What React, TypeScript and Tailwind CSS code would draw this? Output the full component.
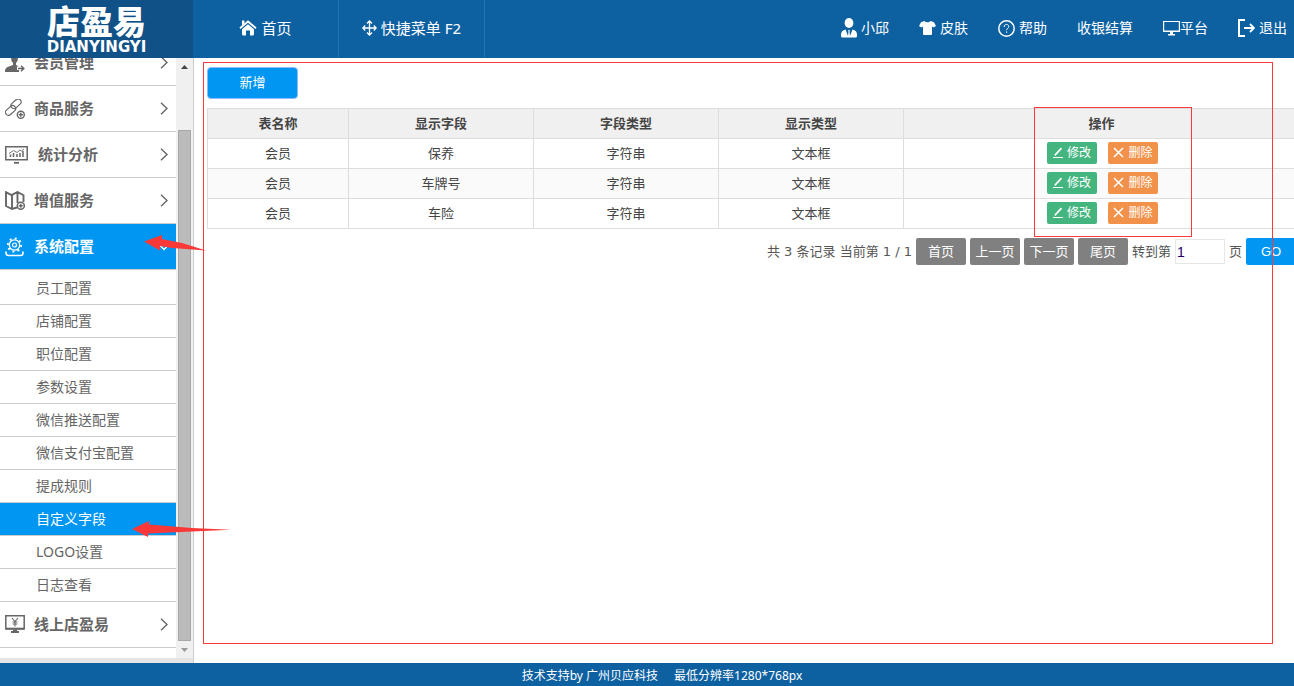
import { useState } from "react";
import type { ReactNode } from "react";

const HomeIcon = () => (
  <svg width="18" height="16" viewBox="0 0 18 16" fill="none">
    <path d="M1 8.2 9 1.5l8 6.7" stroke="currentColor" strokeWidth="1.8" />
    <path d="M3 0.5h2.4v3L3 5.5z" fill="currentColor" />
    <path
      d="M3 9.2 9 4.3l6 4.9V14q0 1.5-1.5 1.5H11v-5H7v5H4.500Q3 15.500 3 14z"
      fill="currentColor"
    />
  </svg>
);

const MoveIcon = () => (
  <svg width="15" height="16" viewBox="0 0 15 16" fill="none">
    <path
      d="M7.500 1.500v13M1 8h13M5 3.500 7.500 1 10 3.500M5 12.500 7.500 15l2.500-2.500M3.200 5.500.8 8l2.400 2.500M11.800 5.500 14.200 8l-2.400 2.500"
      stroke="currentColor"
      strokeWidth="1.300"
    />
  </svg>
);

const UserIcon = () => (
  <svg width="16" height="20" viewBox="0 0 16 20" fill="currentColor">
    <ellipse cx="8" cy="5" rx="4.400" ry="5" />
    <path d="M4.500 11.500 7 18l.5-4.500-.7-1.300h2.400l-.7 1.300L9 18l2.500-6.500c3 .7 4.500 2.500 4.500 5V18q0 1.500-1.500 1.500h-13Q0 19.500 0 18v-1.500c0-2.500 1.500-4.300 4.500-5z" />
  </svg>
);

const ShirtIcon = () => (
  <svg width="17" height="14" viewBox="0 0 17 14" fill="currentColor">
    <path d="M5.500 0c1 1.800 5 1.800 6 0L15 1.200 17 5l-2.500 1.500L13 5.500V13q0 1-1 1H5q-1 0-1-1V5.500L2.500 6.500 0 5l2-3.800z" />
  </svg>
);

const HelpIcon = () => (
  <svg width="17" height="17" viewBox="0 0 17 17" fill="none">
    <circle cx="8.500" cy="8.500" r="7.700" stroke="currentColor" strokeWidth="1.500" />
    <path
      d="M6.200 7c0-1.800 1-2.600 2.300-2.600s2.300.8 2.300 2.200c0 1.600-2.200 1.800-2.200 3.600"
      stroke="currentColor"
      strokeWidth="1"
    />
    <path d="M8 11.500h1.200v1.200H8z" fill="currentColor" />
  </svg>
);

const ScreenIcon = () => (
  <svg width="17" height="16" viewBox="0 0 17 16" fill="none">
    <path d="M.6 1.500h15.800v10H.6z" stroke="currentColor" strokeWidth="1.200" />
    <path d="M.5 10.500h16V12h-16zM7 12h3v2h2v1.500H5V14h2z" fill="currentColor" />
  </svg>
);

const ExitIcon = () => (
  <svg width="17" height="18" viewBox="0 0 17 18" fill="none">
    <path d="M7 1H1v16h6" stroke="currentColor" strokeWidth="2" />
    <path d="M6 9h10M12 5l4 4-4 4" stroke="currentColor" strokeWidth="1.800" />
  </svg>
);

const MemberIcon = () => (
  <svg width="20" height="20" viewBox="0 0 20 20" fill="currentColor">
    <path d="M5.500 0h8l-1 8-1.500 2v2l3 1.200H12V17h2v2H0c0-4 1.500-5 8-7v-2L6.500 8z" />
    <path
      d="M13 15.500h5M16 12.800l2.800 2.700L16 18.200"
      fill="none"
      stroke="currentColor"
      strokeWidth="1.500"
    />
  </svg>
);

const LinkIcon = () => (
  <svg width="20" height="20" viewBox="0 0 20 20" fill="none" stroke="currentColor">
    <rect x="5.300" y="1.800" width="11.500" height="6" rx="3" transform="rotate(-42 11 4.800)" strokeWidth="1.200" />
    <rect x="-.2" y="8.500" width="11.500" height="6" rx="3" transform="rotate(-42 5.500 11.500)" strokeWidth="1.200" />
    <circle cx="15.800" cy="15.800" r="3.500" fill="white" strokeWidth="1.400" />
    <path d="M15.800 13.800v4M13.800 15.800h4" strokeWidth="1.400" />
  </svg>
);

const ChartIcon = () => (
  <svg width="24" height="18" viewBox="0 0 24 18" fill="none" stroke="currentColor">
    <path d="M.8.8h21.400v12.900H.8z" strokeWidth="1.500" />
    <path d="M5.500 11V8.500M8.500 11V7M12 11V8M15 11V7M18 11V5" strokeWidth="1.500" />
    <path d="m4 7.500 4.500-3 3.500 2 3-2.500 1.500 1L19 3" strokeWidth=".9" />
    <path d="M9 16.800h5" strokeWidth="1.800" />
  </svg>
);

const MapIcon = () => (
  <svg width="20" height="19" viewBox="0 0 20 19" fill="none" stroke="currentColor">
    <path
      d="M12 16.500 7 18l-6-3V1.200l5.500 3L12.500 1l6 3.200V11M7 4.200V18M12.500 1v11"
      strokeWidth="1.900"
    />
    <circle cx="15.800" cy="14.800" r="3.500" fill="white" strokeWidth="1.500" />
    <path d="M15.800 12.800v4M13.800 14.800h4" strokeWidth="1.500" />
  </svg>
);

const GearIcon = () => (
  <svg width="20" height="20" viewBox="0 0 20 20" fill="none" stroke="currentColor">
    <circle cx="9.500" cy="8" r="5.200" strokeWidth="1.300" />
    <circle cx="9.500" cy="8" r="2" strokeWidth="1.200" />
    <circle cx="9.500" cy="8" r="6.700" strokeWidth="1.800" strokeDasharray="2 3.260" />
    <path d="M1 14.500v1.500q0 2.500 2.500 2.500h12q2.500 0 2.500-2.500v-1.500" strokeWidth="1.600" />
  </svg>
);

const YenScreenIcon = () => (
  <svg width="20" height="19" viewBox="0 0 20 19" fill="none" stroke="currentColor">
    <path d="M.8.8h18.400v12.900H.8z" strokeWidth="1.500" />
    <path d="M.5 13.700h19" strokeWidth="2" />
    <path d="m7 3 3 3.500L13 3M10 6.500V11.500M7.500 7h5M7.500 9h5" strokeWidth="1.100" />
    <path d="M8 14.500h4V16h2v2H6v-2h2z" fill="currentColor" stroke="none" />
  </svg>
);

const ChevronIcon = ({ open }: { open: boolean }) => (
  <svg
    width="8"
    height="13"
    viewBox="0 0 8 13"
    fill="none"
    className={open ? "rotate-90 overflow-visible" : ""}
  >
    <path d="m1 .8 6 5.700-6 5.700" stroke="currentColor" strokeWidth="1.400" />
  </svg>
);

const EditIcon = () => (
  <svg width="10" height="11" viewBox="0 0 10 11" fill="none" stroke="currentColor">
    <path d="M0 10.500h10" strokeWidth="1" />
    <path d="M1.800 8.300 8.500 1.200" strokeWidth="1.700" />
  </svg>
);

const CrossIcon = () => (
  <svg width="11" height="11" viewBox="0 0 11 11" fill="none">
    <path d="m1 1 9 9M10 1l-9 9" stroke="currentColor" strokeWidth="1.500" />
  </svg>
);

const userLinks = [
  { label: "小邱", icon: <UserIcon />, gap: "gap-1" },
  { label: "皮肤", icon: <ShirtIcon />, gap: "gap-1" },
  { label: "帮助", icon: <HelpIcon />, gap: "gap-1" },
  { label: "收银结算", icon: null, gap: "" },
  { label: "平台", icon: <ScreenIcon />, gap: "" },
  { label: "退出", icon: <ExitIcon />, gap: "gap-1" },
];

const configItems = [
  "员工配置",
  "店铺配置",
  "职位配置",
  "参数设置",
  "微信推送配置",
  "微信支付宝配置",
  "提成规则",
  "自定义字段",
  "LOGO设置",
  "日志查看",
];

const fields = [
  { table: "会员", name: "保养", type: "字符串", display: "文本框" },
  { table: "会员", name: "车牌号", type: "字符串", display: "文本框" },
  { table: "会员", name: "车险", type: "字符串", display: "文本框" },
];

const pagers = ["首页", "上一页", "下一页", "尾页"];

function MenuItem({
  icon,
  label,
  active = false,
}: {
  icon: ReactNode;
  label: string;
  active?: boolean;
}) {
  return (
    <a
      href="#"
      className={`flex h-[46px] shrink-0 items-center border-b border-[#ccc] pl-[5px] pr-2 text-[15px] font-bold ${
        active ? "bg-[#0096f2] text-white" : "text-[#666]"
      }`}
    >
      {icon}
      <span className="ml-[9px] flex-1">{label}</span>
      <ChevronIcon open={active} />
    </a>
  );
}

function Header() {
  return (
    <header className="flex h-[58px] shrink-0 bg-[#0e61a1] text-white">
      <div className="flex w-[193px] shrink-0 flex-col items-center justify-center bg-[#105288]">
        <div className="text-[33px] leading-9 font-black">店盈易</div>
        <div className="font-['DejaVu_Sans',sans-serif] text-[15px] leading-[14px] font-bold">
          DIANYINGYI
        </div>
      </div>
      <nav className="flex text-[15px]">
        <a
          href="#"
          className="flex w-[146px] items-center justify-center gap-1 border-r border-[#2472ad] pb-0.5"
        >
          <HomeIcon />
          首页
        </a>
        <a
          href="#"
          className="flex w-[146px] items-center justify-center gap-1 border-r border-[#2472ad] pb-0.5"
        >
          <MoveIcon />
          快捷菜单 F2
        </a>
      </nav>
      <nav className="ml-auto flex items-center gap-[30px] pr-[7px] pb-0.5 text-sm">
        {userLinks.map(({ label, icon, gap }) => (
          <a key={label} href="#" className={`flex items-center whitespace-nowrap ${gap}`}>
            {icon}
            {label}
          </a>
        ))}
      </nav>
    </header>
  );
}

function Sidebar() {
  const [current, setCurrent] = useState("自定义字段");

  return (
    <aside className="flex w-[194px] shrink-0 flex-col border-r border-[#ccc]">
      <div className="flex min-h-0 flex-1">
        <div className="flex-1 overflow-hidden">
          <div className="-mt-[18px]">
            <MenuItem icon={<MemberIcon />} label="会员管理" />
            <MenuItem icon={<LinkIcon />} label="商品服务" />
            <MenuItem icon={<ChartIcon />} label="统计分析" />
            <MenuItem icon={<MapIcon />} label="增值服务" />
            <MenuItem icon={<GearIcon />} label="系统配置" active />
            <ul className="pt-0.5">
              {configItems.map((item) => (
                <li key={item}>
                  <a
                    href="#"
                    onClick={() => setCurrent(item)}
                    className={`flex h-[33px] items-center border-b border-[#ccc] pl-9 text-sm ${
                      item === current ? "bg-[#0096f2] text-white" : "text-[#666]"
                    }`}
                  >
                    {item}
                  </a>
                </li>
              ))}
            </ul>
            <MenuItem icon={<YenScreenIcon />} label="线上店盈易" />
          </div>
        </div>

        {/* scroll bar */}
        <div className="flex w-[17px] flex-col items-center bg-[#f0f0f0]">
          <svg width="17" height="17" viewBox="0 0 17 17">
            <path d="m5 11 3.500-4 3.500 4z" fill="#444" />
          </svg>
          <div className="mt-[55px] w-[13px] flex-1 border border-[#a8a8a8] bg-[#bbb]" />
          <svg width="17" height="17" viewBox="0 0 17 17">
            <path d="m5 7 3.500 4L12 7z" fill="#999" />
          </svg>
        </div>
      </div>
      <div className="h-[5px] bg-[#e5e5e5]" />
    </aside>
  );
}

function FieldTable() {
  const th = "border border-[#ddd] font-bold";
  const td = "border border-[#ddd]";

  return (
    <table className="mt-[9px] w-full table-fixed border-collapse text-center text-[13px] text-[#444]">
      <thead>
        <tr className="h-[30px] bg-[#f0f0f0]">
          <th className={`${th} w-[141px]`}>表名称</th>
          <th className={`${th} w-[185px]`}>显示字段</th>
          <th className={`${th} w-[185px]`}>字段类型</th>
          <th className={`${th} w-[185px]`}>显示类型</th>
          <th className={th}>操作</th>
        </tr>
      </thead>
      <tbody>
        {fields.map((field) => (
          <tr key={field.name} className="h-[30px] even:bg-[#fafafa]">
            <td className={td}>{field.table}</td>
            <td className={td}>{field.name}</td>
            <td className={td}>{field.type}</td>
            <td className={td}>{field.display}</td>
            <td className={td}>
              <div className="flex justify-center gap-[11px] pb-0.5 pl-0.5 text-xs text-white">
                <button className="flex h-[22px] w-[50px] items-center justify-center gap-1 rounded-xs bg-[#44b57f]">
                  <EditIcon />
                  修改
                </button>
                <button className="flex h-[22px] w-[50px] items-center justify-center gap-1 rounded-xs bg-[#f2914a]">
                  <CrossIcon />
                  删除
                </button>
              </div>
            </td>
          </tr>
        ))}
      </tbody>
    </table>
  );
}

function Pagination() {
  const [page, setPage] = useState("1");

  return (
    <div className="mt-[9px] flex items-center justify-end gap-1 pr-1 text-[13px] whitespace-nowrap text-[#555]">
      <span className="font-['DejaVu_Sans','Noto_Sans_CJK_SC',sans-serif]">
        共 3 条记录 当前第 1 / 1
      </span>
      {pagers.map((label) => (
        <button key={label} className="h-[27px] w-[50px] rounded-xs bg-[#808080] text-white">
          {label}
        </button>
      ))}
      <label htmlFor="page">转到第</label>
      <input
        id="page"
        value={page}
        onChange={(e) => setPage(e.target.value)}
        className="h-[25px] w-[50px] border border-[#e6e6e6] px-px font-['Liberation_Sans',sans-serif] text-sm text-[#206]"
      />
      <span>页</span>
      <button className="h-[27px] w-[50px] rounded-xs bg-[#0096f2] font-['Liberation_Sans',sans-serif] text-[13px] text-white">
        GO
      </button>
    </div>
  );
}

export default function App() {
  return (
    <div className="flex h-screen flex-col overflow-hidden bg-white font-['Noto_Sans','Noto_Sans_CJK_SC',sans-serif]">
      <Header />

      <div className="relative flex min-h-0 flex-1">
        <Sidebar />

        <main className="relative min-w-0 flex-1 overflow-hidden">
          <div className="-mr-1.5 ml-[13px] pt-[9px]">
            <button className="block h-8 w-[91px] rounded-sm border border-[#8fbcf8] bg-[#0096f2] text-[13px] text-white">
              新增
            </button>
            <FieldTable />
            <Pagination />
          </div>

          {/* highlight frames */}
          <div className="pointer-events-none absolute top-1 right-[21px] bottom-[19px] left-[9px] border border-[#f93a3a]" />
          <div className="pointer-events-none absolute top-[49px] right-[102px] h-[130px] w-[158px] border border-[#f93a3a]" />
        </main>

        {/* arrows */}
        <svg
          className="pointer-events-none absolute top-[176px] left-[144px]"
          width="64"
          height="18"
          viewBox="0 0 64 18"
          fill="#fb3838"
        >
          <path d="M0 7.500 18 1v4L38 9l24 7.500L28 14l-12-2v4.500z" />
        </svg>
        <svg
          className="pointer-events-none absolute top-[463px] left-[132px]"
          width="100"
          height="18"
          viewBox="0 0 100 18"
          fill="#fb3838"
        >
          <path d="M0 8 17 0v3.500L60 7l39 1.800L60 10.500l-44 2V16z" />
        </svg>
      </div>

      <footer className="flex h-[23px] shrink-0 items-center justify-center gap-4 bg-[#0e61a1] pt-0.5 pl-[30px] text-xs text-white">
        <span>技术支持by 广州贝应科技</span>
        <span>最低分辨率1280*768px</span>
      </footer>
    </div>
  );
}
